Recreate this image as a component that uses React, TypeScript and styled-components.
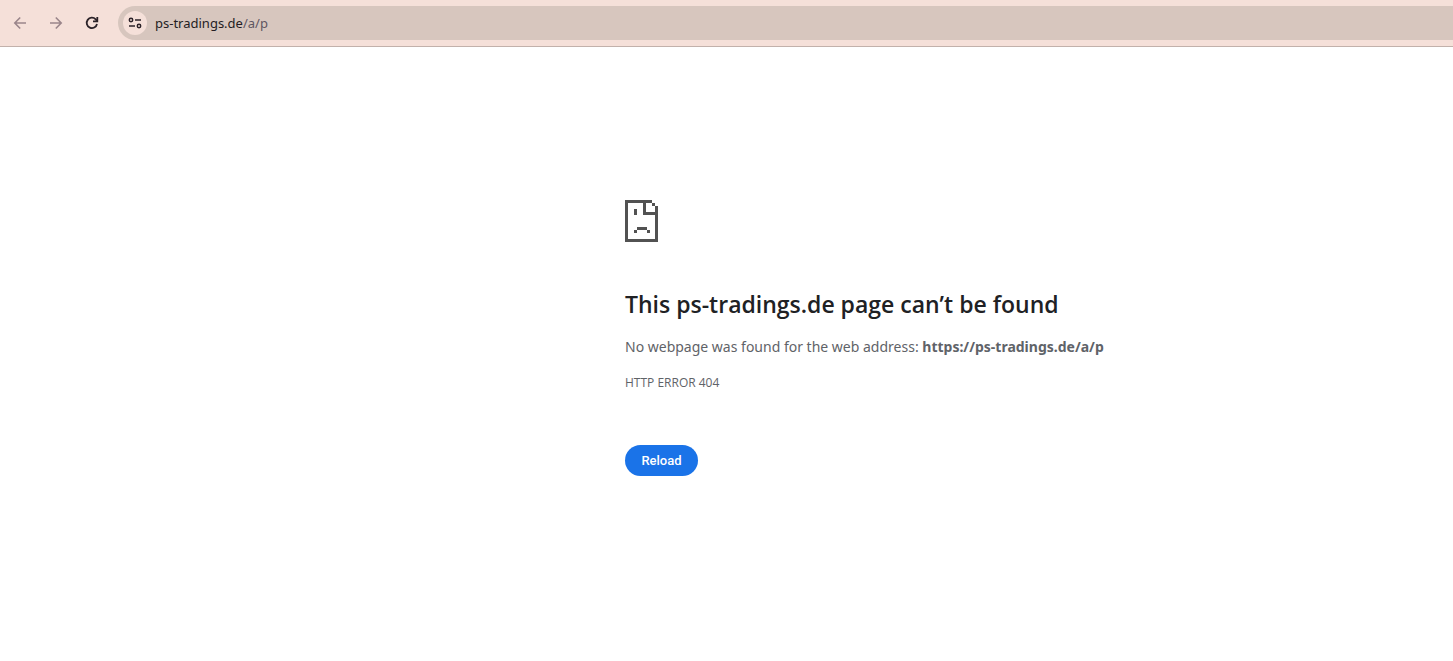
import React from "react";
import styled, { createGlobalStyle } from "styled-components";

const GlobalStyle = createGlobalStyle`
  * { box-sizing: border-box; }
  body {
    margin: 0;
    background: #fff;
    color: #5f6368;
    font-family: "Segoe UI", "Noto Sans", "Open Sans", sans-serif;
  }
`;

const Page = styled.div`
  display: flex;
  flex-direction: column;
  min-height: 100vh;
`;

const Toolbar = styled.header`
  display: flex;
  align-items: center;
  height: 47px;
  padding: 0 0 1px 10px;
  background: #f5e0d9;
  border-bottom: 1px solid #c2b1ab;
`;

const NavButtons = styled.nav`
  display: flex;
  gap: 16px;
  margin-right: 16px;
`;

const IconButton = styled.button`
  display: flex;
  align-items: center;
  justify-content: center;
  width: 20px;
  height: 20px;
  padding: 0;
  border: 0;
  background: none;
  color: #2b2228;

  &:disabled { color: #9a858a; }
`;

const AddressBar = styled.div`
  display: flex;
  flex: 1;
  align-items: center;
  gap: 8px;
  height: 34px;
  padding-left: 5px;
  background: #d7c6be;
  border-radius: 17px 0 0 17px;
`;

const SiteInfo = styled.button`
  display: flex;
  align-items: center;
  justify-content: center;
  width: 24px;
  height: 24px;
  padding: 0;
  border: 0;
  border-radius: 50%;
  background: #f5e0d9;
  color: #2b2228;
`;

const Address = styled.a`
  color: #5f5662;
  font-size: 13px;
  line-height: 20px;
  text-decoration: none;
`;

const Host = styled.span`
  color: #241d23;
`;

const Content = styled.main`
  display: grid;
  grid-template-columns: minmax(24px, 625px) minmax(0, 600px);
  padding-top: 153px;
`;

const ErrorPanel = styled.section`
  grid-column: 2;
`;

const Title = styled.h1`
  margin: 47px 0 17px;
  color: #202124;
  font-family: "Segoe UI", "Open Sans", sans-serif;
  font-size: 23px;
  font-weight: 600;
  line-height: 30px;
`;

const Message = styled.p`
  margin: 0 0 16px;
  font-size: 14px;
  line-height: 22px;
`;

const ErrorCode = styled.p`
  margin: 0 0 53px;
  font-family: "Segoe UI", "Open Sans", sans-serif;
  font-size: 12px;
  line-height: 18px;
`;

const ReloadButton = styled.button`
  min-width: 73px;
  height: 31px;
  padding: 0 16px;
  border: 0;
  border-radius: 16px;
  background: #1a73e8;
  color: #fff;
  font-family: Roboto, sans-serif;
  font-size: 13px;
  font-weight: 500;
`;

const BlockIcon = styled.svg`
  display: block;
`;

const BackIcon = () => (
  <svg width="20" height="20" viewBox="0 0 20 20" fill="none" stroke="currentColor" strokeWidth="1.6" aria-hidden="true">
    <path d="M16 10H5M10.2 4.5 4.8 10l5.4 5.5" />
  </svg>
);

const ForwardIcon = () => (
  <svg width="20" height="20" viewBox="0 0 20 20" fill="none" stroke="currentColor" strokeWidth="1.6" aria-hidden="true">
    <path d="M4 10h11M9.8 4.5 15.2 10l-5.4 5.5" />
  </svg>
);

const ReloadIcon = () => (
  <svg width="20" height="20" viewBox="0 0 20 20" fill="none" stroke="currentColor" strokeWidth="1.8" aria-hidden="true">
    <path d="M15 11a5.2 5.2 0 1 1-1.3-4.7L15.2 8" />
    <path d="M15.3 4v4.4H11" />
  </svg>
);

const TuneIcon = () => (
  <svg width="14" height="14" viewBox="0 0 14 14" fill="none" stroke="currentColor" strokeWidth="1.5" aria-hidden="true">
    <circle cx="3" cy="4" r="1.7" />
    <path d="M7 4h6M1 10h6" />
    <circle cx="11" cy="10" r="1.7" />
  </svg>
);

const SadPageIcon = () => (
  <BlockIcon width="33" height="42" viewBox="0 0 33 42" fill="#525252" shapeRendering="crispEdges" aria-hidden="true">
    <path d="M0 0h27v3H21v9h9V6h3v36H0zM3 3v36h27V15H18V3z" fillRule="evenodd" />
    <path d="M27 3h3v3h-3zM9 9h3v6H9zM12 27h10v3H12zM9 30h3v3H9zM22 30h3v3h-3z" />
  </BlockIcon>
);

export default function App() {
  return (
    <Page>
      <GlobalStyle />
      <Toolbar>
        <NavButtons aria-label="Browser navigation">
          <IconButton disabled aria-label="Back"><BackIcon /></IconButton>
          <IconButton disabled aria-label="Forward"><ForwardIcon /></IconButton>
          <IconButton aria-label="Reload this page"><ReloadIcon /></IconButton>
        </NavButtons>
        <AddressBar>
          <SiteInfo aria-label="View site information"><TuneIcon /></SiteInfo>
          <Address href="#"><Host>ps-tradings.de</Host>/a/p</Address>
        </AddressBar>
      </Toolbar>
      <Content>
        <ErrorPanel>
          <SadPageIcon />
          <Title>This ps-tradings.de page can’t be found</Title>
          <Message>
            No webpage was found for the web address: <strong>https://ps-tradings.de/a/p</strong>
          </Message>
          <ErrorCode>HTTP ERROR 404</ErrorCode>
          <ReloadButton>Reload</ReloadButton>
        </ErrorPanel>
      </Content>
    </Page>
  );
}
